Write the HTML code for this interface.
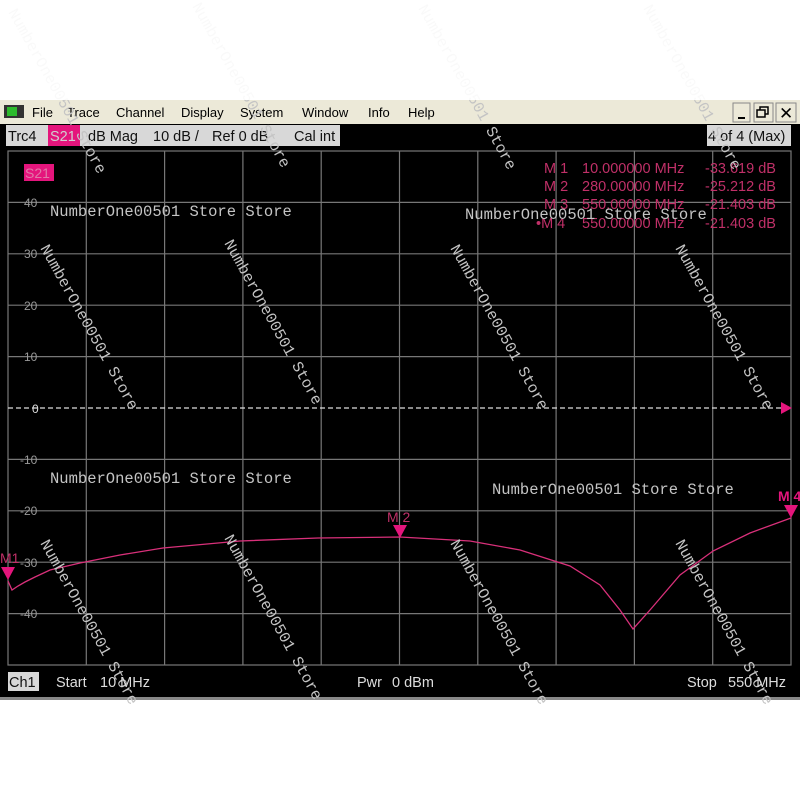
<!DOCTYPE html>
<html><head><meta charset="utf-8"><style>
html,body{margin:0;padding:0;width:800px;height:800px;background:#fff;overflow:hidden;font-family:"Liberation Sans",sans-serif}
</style></head><body>
<svg width="800" height="800" xmlns="http://www.w3.org/2000/svg" style="position:absolute;left:0;top:0">
<rect x="0" y="0" width="800" height="800" fill="#fff"/>
<rect x="0" y="100" width="800" height="24" fill="#ece9d8"/>
<rect x="4" y="105" width="20" height="13" fill="#333"/>
<rect x="7" y="107" width="10" height="9" fill="#2dbb2d"/>
<g font-size="13" fill="#000">
<text x="32" y="117">File</text><text x="67" y="117">Trace</text><text x="116" y="117">Channel</text>
<text x="181" y="117">Display</text><text x="240" y="117">System</text><text x="302" y="117">Window</text>
<text x="368" y="117">Info</text><text x="408" y="117">Help</text>
</g>
<rect x="733" y="103" width="17" height="19" fill="#ece9d8" stroke="#888"/>
<rect x="738" y="117" width="7" height="2" fill="#000"/>
<rect x="754" y="103" width="19" height="19" fill="#ece9d8" stroke="#888"/>
<rect x="760" y="107" width="8" height="7" fill="none" stroke="#000" stroke-width="1.5"/>
<rect x="757" y="110" width="8" height="7" fill="#ece9d8" stroke="#000" stroke-width="1.5"/>
<rect x="776" y="103" width="20" height="19" fill="#ece9d8" stroke="#888"/>
<text x="779" y="119" font-size="17" fill="#000">✕</text>
<rect x="0" y="124" width="800" height="573" fill="#000"/>
<rect x="0" y="697" width="800" height="3" fill="#888"/>
<rect x="6" y="125" width="334" height="21" fill="#d8d8d8"/>
<rect x="48" y="125" width="32" height="21" fill="#e4157c"/>
<g font-size="14.5" fill="#111">
<text x="8" y="141">Trc4</text><text x="50" y="141" fill="#d0d0d0">S21</text>
<text x="88" y="141">dB Mag</text><text x="153" y="141">10 dB /</text><text x="212" y="141">Ref 0 dB</text><text x="294" y="141">Cal int</text>
</g>
<rect x="707" y="125" width="84" height="21" fill="#d8d8d8"/>
<text x="708" y="141" font-size="14.5" fill="#111">4 of 4 (Max)</text>
<g stroke="#777" stroke-width="1.2" fill="none">
<rect x="8" y="151" width="783" height="514"/>
<path d="M86.3 151V665M164.6 151V665M242.9 151V665M321.2 151V665M399.5 151V665M477.8 151V665M556.1 151V665M634.4 151V665M712.7 151V665"/>
<path d="M8 202.4H791M8 253.8H791M8 305.2H791M8 356.6H791M8 459.4H791M8 510.8H791M8 562.2H791M8 613.6H791"/>
</g>
<path d="M8 408H791" stroke="#ddd" stroke-width="1.2" stroke-dasharray="5,3"/>
<g font-size="12" fill="#999">
<text x="24" y="207">40</text><text x="24" y="258">30</text><text x="24" y="310">20</text><text x="24" y="361">10</text>
<text x="32" y="413" fill="#ddd">0</text>
<text x="20" y="464">-10</text><text x="20" y="515">-20</text><text x="20" y="567">-30</text><text x="20" y="618">-40</text>
</g>
<rect x="24" y="164" width="30" height="17" fill="#e4157c"/>
<text x="25" y="178" font-size="14" fill="#e07aa8">S21</text>
<g font-size="14.5" fill="#c03068">
<text x="544" y="173">M 1</text><text x="582" y="173">10.000000 MHz</text><text x="705" y="173">-33.619 dB</text>
<text x="544" y="191">M 2</text><text x="582" y="191">280.00000 MHz</text><text x="705" y="191">-25.212 dB</text>
<text x="544" y="209">M 3</text><text x="582" y="209">550.00000 MHz</text><text x="705" y="209">-21.403 dB</text>
<text x="536" y="228">•M 4</text><text x="582" y="228">550.00000 MHz</text><text x="705" y="228">-21.403 dB</text>
</g>
<path d="M8 581L12 590L18 586L25 582L35 577L50 570L80 563L120 555L163 548L240 541L318 538L400 537L470 541L520 550L570 566L600 585L620 610L633 629L650 610L680 575L713 551L750 533L791 518" fill="none" stroke="#d9307a" stroke-width="1.3"/>
<path d="M1 567H15L8 580Z" fill="#e4157c"/>
<path d="M393 525H407L400 538Z" fill="#e4157c"/>
<path d="M784 505H798L791 518Z" fill="#e4157c"/>
<path d="M792 408L781 402V414Z" fill="#e4157c"/>
<text x="0" y="563" font-size="14" fill="#c03068">M1</text>
<text x="387" y="522" font-size="14" fill="#c03068">M 2</text>
<text x="778" y="501" font-size="14" font-weight="bold" fill="#e4157c">M 4</text>
<g font-family="Liberation Mono, monospace" font-size="15.5" fill="#c4c4c4">
<text x="50" y="216">NumberOne00501 Store Store</text>
<text x="465" y="219">NumberOne00501 Store Store</text>
<text x="50" y="483">NumberOne00501 Store Store</text>
<text x="492" y="494">NumberOne00501 Store Store</text>
<text transform="translate(40,248) rotate(61)">NumberOne00501 Store</text>
<text transform="translate(224,243) rotate(61)">NumberOne00501 Store</text>
<text transform="translate(450,248) rotate(61)">NumberOne00501 Store</text>
<text transform="translate(675,248) rotate(61)">NumberOne00501 Store</text>
<text transform="translate(40,543) rotate(61)">NumberOne00501 Store</text>
<text transform="translate(224,538) rotate(61)">NumberOne00501 Store</text>
<text transform="translate(450,543) rotate(61)">NumberOne00501 Store</text>
<text transform="translate(675,543) rotate(61)">NumberOne00501 Store</text>
<text transform="translate(8,12) rotate(61)">NumberOne00501 Store</text>
<text transform="translate(192,6) rotate(61)">NumberOne00501 Store</text>
<text transform="translate(418,8) rotate(61)">NumberOne00501 Store</text>
<text transform="translate(643,8) rotate(61)">NumberOne00501 Store</text>
</g>
<rect x="0" y="0" width="800" height="100" fill="#fff" opacity="0.9"/>
<rect x="8" y="672" width="31" height="19" fill="#d8d8d8"/>
<g font-size="14.5">
<text x="9" y="687" fill="#111">Ch1</text>
<text x="56" y="687" fill="#ddd">Start</text><text x="100" y="687" fill="#ddd">10 MHz</text>
<text x="357" y="687" fill="#ddd">Pwr</text><text x="392" y="687" fill="#ddd">0 dBm</text>
<text x="687" y="687" fill="#ddd">Stop</text><text x="728" y="687" fill="#ddd">550 MHz</text>
</g>
</svg>
</body></html>
